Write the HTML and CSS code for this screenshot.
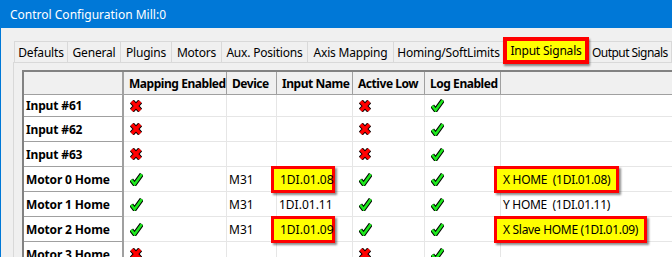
FILE: index.html
```html
<!DOCTYPE html>
<html>
<head>
<meta charset="utf-8">
<link rel="stylesheet" href="styles.css">
</head>
<body>
<div class="window">
  <div class="titlebar">Control Configuration Mill:0</div>
  <div class="tabs">
    <div class="tab w53">Defaults</div>
    <div class="tab w53">General</div>
    <div class="tab w51">Plugins</div>
    <div class="tab w50">Motors</div>
    <div class="tab w86">Aux. Positions</div>
    <div class="tab w86">Axis Mapping</div>
    <div class="tab w110">Homing/SoftLimits</div>
    <div class="tab sel">Input Signals</div>
    <div class="tab end">Output Signals</div>
  </div>
  <div class="panel">
    <div class="grid">
      <div class="hd corner"></div>
      <div class="hd">Mapping Enabled</div>
      <div class="hd">Device</div>
      <div class="hd">Input Name</div>
      <div class="hd">Active Low</div>
      <div class="hd">Log Enabled</div>
      <div class="hd last"></div>

      <div class="rh">Input #61</div>
      <div class="c ic-cell"><svg class="ic" viewBox="0 0 12 12"><path d="M1.8 1.5L10.2 10.5M10.2 1.5L1.8 10.5" stroke="#000" stroke-width="5.4"/><path d="M1.8 1.5L10.2 10.5M10.2 1.5L1.8 10.5" stroke="#f00" stroke-width="3.4"/></svg></div>
      <div class="c"></div>
      <div class="c"></div>
      <div class="c ic-cell"><svg class="ic" viewBox="0 0 12 12"><path d="M1.8 1.5L10.2 10.5M10.2 1.5L1.8 10.5" stroke="#000" stroke-width="5.4"/><path d="M1.8 1.5L10.2 10.5M10.2 1.5L1.8 10.5" stroke="#f00" stroke-width="3.4"/></svg></div>
      <div class="c ic-cell"><svg class="ick" viewBox="0 0 13 13"><path d="M1.2 6.8L4.6 11.2L11.8 1.2" fill="none" stroke="#000" stroke-width="4.6"/><path d="M1.2 6.8L4.6 11.2L11.8 1.2" fill="none" stroke="#1ee81e" stroke-width="2.6"/></svg></div>
      <div class="c last"></div>

      <div class="rh">Input #62</div>
      <div class="c ic-cell"><svg class="ic" viewBox="0 0 12 12"><path d="M1.8 1.5L10.2 10.5M10.2 1.5L1.8 10.5" stroke="#000" stroke-width="5.4"/><path d="M1.8 1.5L10.2 10.5M10.2 1.5L1.8 10.5" stroke="#f00" stroke-width="3.4"/></svg></div>
      <div class="c"></div>
      <div class="c"></div>
      <div class="c ic-cell"><svg class="ic" viewBox="0 0 12 12"><path d="M1.8 1.5L10.2 10.5M10.2 1.5L1.8 10.5" stroke="#000" stroke-width="5.4"/><path d="M1.8 1.5L10.2 10.5M10.2 1.5L1.8 10.5" stroke="#f00" stroke-width="3.4"/></svg></div>
      <div class="c ic-cell"><svg class="ick" viewBox="0 0 13 13"><path d="M1.2 6.8L4.6 11.2L11.8 1.2" fill="none" stroke="#000" stroke-width="4.6"/><path d="M1.2 6.8L4.6 11.2L11.8 1.2" fill="none" stroke="#1ee81e" stroke-width="2.6"/></svg></div>
      <div class="c last"></div>

      <div class="rh">Input #63</div>
      <div class="c ic-cell"><svg class="ic" viewBox="0 0 12 12"><path d="M1.8 1.5L10.2 10.5M10.2 1.5L1.8 10.5" stroke="#000" stroke-width="5.4"/><path d="M1.8 1.5L10.2 10.5M10.2 1.5L1.8 10.5" stroke="#f00" stroke-width="3.4"/></svg></div>
      <div class="c"></div>
      <div class="c"></div>
      <div class="c ic-cell"><svg class="ic" viewBox="0 0 12 12"><path d="M1.8 1.5L10.2 10.5M10.2 1.5L1.8 10.5" stroke="#000" stroke-width="5.4"/><path d="M1.8 1.5L10.2 10.5M10.2 1.5L1.8 10.5" stroke="#f00" stroke-width="3.4"/></svg></div>
      <div class="c ic-cell"><svg class="ick" viewBox="0 0 13 13"><path d="M1.2 6.8L4.6 11.2L11.8 1.2" fill="none" stroke="#000" stroke-width="4.6"/><path d="M1.2 6.8L4.6 11.2L11.8 1.2" fill="none" stroke="#1ee81e" stroke-width="2.6"/></svg></div>
      <div class="c last"></div>

      <div class="rh">Motor 0 Home</div>
      <div class="c ic-cell"><svg class="ick" viewBox="0 0 13 13"><path d="M1.2 6.8L4.6 11.2L11.8 1.2" fill="none" stroke="#000" stroke-width="4.6"/><path d="M1.2 6.8L4.6 11.2L11.8 1.2" fill="none" stroke="#1ee81e" stroke-width="2.6"/></svg></div>
      <div class="c">M31</div>
      <div class="c"><span class="mark">1DI.01.08</span></div>
      <div class="c ic-cell"><svg class="ick" viewBox="0 0 13 13"><path d="M1.2 6.8L4.6 11.2L11.8 1.2" fill="none" stroke="#000" stroke-width="4.6"/><path d="M1.2 6.8L4.6 11.2L11.8 1.2" fill="none" stroke="#1ee81e" stroke-width="2.6"/></svg></div>
      <div class="c ic-cell"><svg class="ick" viewBox="0 0 13 13"><path d="M1.2 6.8L4.6 11.2L11.8 1.2" fill="none" stroke="#000" stroke-width="4.6"/><path d="M1.2 6.8L4.6 11.2L11.8 1.2" fill="none" stroke="#1ee81e" stroke-width="2.6"/></svg></div>
      <div class="c last"><span class="mark wide">X HOME  (1DI.01.08)</span></div>

      <div class="rh">Motor 1 Home</div>
      <div class="c ic-cell"><svg class="ick" viewBox="0 0 13 13"><path d="M1.2 6.8L4.6 11.2L11.8 1.2" fill="none" stroke="#000" stroke-width="4.6"/><path d="M1.2 6.8L4.6 11.2L11.8 1.2" fill="none" stroke="#1ee81e" stroke-width="2.6"/></svg></div>
      <div class="c">M31</div>
      <div class="c">1DI.01.11</div>
      <div class="c ic-cell"><svg class="ick" viewBox="0 0 13 13"><path d="M1.2 6.8L4.6 11.2L11.8 1.2" fill="none" stroke="#000" stroke-width="4.6"/><path d="M1.2 6.8L4.6 11.2L11.8 1.2" fill="none" stroke="#1ee81e" stroke-width="2.6"/></svg></div>
      <div class="c ic-cell"><svg class="ick" viewBox="0 0 13 13"><path d="M1.2 6.8L4.6 11.2L11.8 1.2" fill="none" stroke="#000" stroke-width="4.6"/><path d="M1.2 6.8L4.6 11.2L11.8 1.2" fill="none" stroke="#1ee81e" stroke-width="2.6"/></svg></div>
      <div class="c last pre">Y HOME  (1DI.01.11)</div>

      <div class="rh">Motor 2 Home</div>
      <div class="c ic-cell"><svg class="ick" viewBox="0 0 13 13"><path d="M1.2 6.8L4.6 11.2L11.8 1.2" fill="none" stroke="#000" stroke-width="4.6"/><path d="M1.2 6.8L4.6 11.2L11.8 1.2" fill="none" stroke="#1ee81e" stroke-width="2.6"/></svg></div>
      <div class="c">M31</div>
      <div class="c"><span class="mark">1DI.01.09</span></div>
      <div class="c ic-cell"><svg class="ick" viewBox="0 0 13 13"><path d="M1.2 6.8L4.6 11.2L11.8 1.2" fill="none" stroke="#000" stroke-width="4.6"/><path d="M1.2 6.8L4.6 11.2L11.8 1.2" fill="none" stroke="#1ee81e" stroke-width="2.6"/></svg></div>
      <div class="c ic-cell"><svg class="ick" viewBox="0 0 13 13"><path d="M1.2 6.8L4.6 11.2L11.8 1.2" fill="none" stroke="#000" stroke-width="4.6"/><path d="M1.2 6.8L4.6 11.2L11.8 1.2" fill="none" stroke="#1ee81e" stroke-width="2.6"/></svg></div>
      <div class="c last"><span class="mark wide">X Slave HOME (1DI.01.09)</span></div>

      <div class="rh">Motor 3 Home</div>
      <div class="c ic-cell"><svg class="ic" viewBox="0 0 12 12"><path d="M1.8 1.5L10.2 10.5M10.2 1.5L1.8 10.5" stroke="#000" stroke-width="5.4"/><path d="M1.8 1.5L10.2 10.5M10.2 1.5L1.8 10.5" stroke="#f00" stroke-width="3.4"/></svg></div>
      <div class="c"></div>
      <div class="c"></div>
      <div class="c ic-cell"><svg class="ic" viewBox="0 0 12 12"><path d="M1.8 1.5L10.2 10.5M10.2 1.5L1.8 10.5" stroke="#000" stroke-width="5.4"/><path d="M1.8 1.5L10.2 10.5M10.2 1.5L1.8 10.5" stroke="#f00" stroke-width="3.4"/></svg></div>
      <div class="c ic-cell"><svg class="ick" viewBox="0 0 13 13"><path d="M1.2 6.8L4.6 11.2L11.8 1.2" fill="none" stroke="#000" stroke-width="4.6"/><path d="M1.2 6.8L4.6 11.2L11.8 1.2" fill="none" stroke="#1ee81e" stroke-width="2.6"/></svg></div>
      <div class="c last"></div>
    </div>
  </div>
</div>
</body>
</html>
```
FILE: styles.css
```css
* { box-sizing: border-box; }
html, body { margin: 0; padding: 0; }
body {
  background: #f0f0f0;
  font-family: "Noto Sans", "Segoe UI", sans-serif;
  font-size: 12px;
  color: #000;
  overflow: hidden;
}
.window {
  height: 257px;
  border-left: 1px solid #0078d7;
  overflow: hidden;
}
.titlebar {
  height: 28px;
  background: #0078d7;
  color: #fff;
  display: flex;
  align-items: center;
  padding-left: 9px;
  padding-top: 1px;
}
.tabs {
  display: flex;
  align-items: flex-start;
  margin-top: 13px;
  padding-left: 13px;
  height: 21px;
  letter-spacing: -0.2px;
}
.tab {
  flex: none;
  height: 21px;
  border: 1px solid #d9d9d9;
  border-bottom: none;
  margin-left: -1px;
  display: flex;
  align-items: center;
  justify-content: center;
  white-space: nowrap;
  background: #f0f0f0;
}
.tab:first-child { margin-left: 0; }
.w50 { width: 51px; }
.w51 { width: 52px; }
.w53 { width: 54px; }
.w86 { width: 87px; }
.w110 { width: 111px; }
.tab.end {
  width: 84px;
  justify-content: flex-start;
  padding-left: 3px;
  letter-spacing: -0.55px;
}
.tab.sel {
  width: 86px;
  height: 27px;
  margin-top: -4px;
  margin-left: -1px;
  border: 4px solid #ff0000;
  background: #ffff00;
  box-shadow: 1px 2px 2px rgba(0, 0, 0, 0.45);
  position: relative;
  z-index: 2;
}
.panel {
  margin-left: 12px;
  border-left: 1px solid #d9d9d9;
  border-top: 1px solid #d9d9d9;
  padding: 7px 0 0 8px;
  height: 200px;
}
.grid {
  display: grid;
  grid-template-columns: 100px 103px 50px 76px 72px 76px 1fr;
  grid-template-rows: 23px 22px repeat(6, 25px);
  border-top: 2px solid #828282;
  border-left: 2px solid #828282;
  background: #fff;
}
.hd {
  background: #f0f0f0;
  font-weight: bold;
  letter-spacing: -0.45px;
  border-right: 1px solid #a0a0a0;
  border-bottom: 1px solid #a0a0a0;
  display: flex;
  align-items: center;
  padding-left: 5px;
  white-space: nowrap;
}
.hd.corner { border-right: 2px solid #a0a0a0; }
.hd.last { border-right: none; }
.rh {
  font-weight: bold;
  letter-spacing: -0.15px;
  border-right: 2px solid #a0a0a0;
  border-bottom: 1px solid #a0a0a0;
  display: flex;
  align-items: center;
  padding-left: 2px;
  white-space: nowrap;
}
.c {
  border-right: 1px solid #e6e6e6;
  border-bottom: 1px solid #e6e6e6;
  display: flex;
  align-items: center;
  padding-left: 2px;
  white-space: nowrap;
}
.c.last { border-right: none; letter-spacing: -0.3px; }
.ic-cell { padding-left: 6px; }
.ic { width: 12px; height: 12px; display: block; }
.ick { width: 13px; height: 13px; display: block; }
.pre { white-space: pre; }
.mark {
  position: relative;
  z-index: 1;
  display: inline-flex;
  align-items: center;
  height: 27px;
  margin: 0 0 0 -8px;
  padding: 0 0 0 6px;
  width: 64px;
  border: 3px solid #ff0000;
  background: #ffff00;
  box-shadow: 2px 2px 2px rgba(0, 0, 0, 0.45);
  white-space: pre;
}
.mark.wide { width: auto; padding-right: 6px; margin-left: -9px; }
```
